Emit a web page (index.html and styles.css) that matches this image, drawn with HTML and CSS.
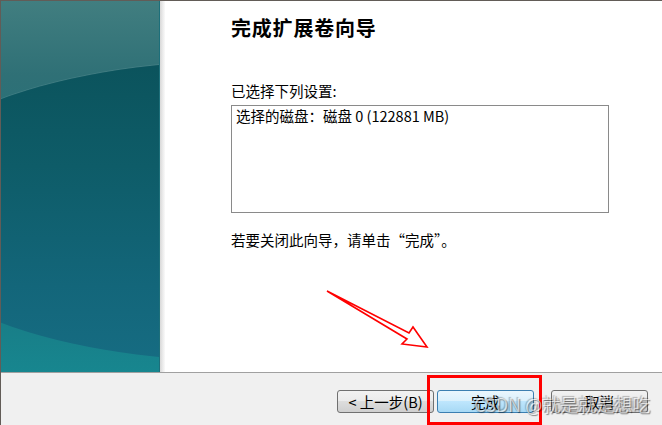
FILE: index.html
```html
<!DOCTYPE html>
<html lang="zh-CN">
<head>
    <meta charset="UTF-8">
    <meta name="viewport" content="width=device-width, initial-scale=1.0">
    <title>扩展卷向导</title>
    <link rel="stylesheet" href="styles.css">
</head>
<body>
    <div class="window">
        <div class="main">
            <div class="banner"></div>
            <div class="banner-edge"></div>
            <div class="content">
                <h1 class="title">完成扩展卷向导</h1>
                <p class="label">已选择下列设置:</p>
                <div class="summary">选择的磁盘：磁盘 0 (122881 MB)</div>
                <p class="hint">若要关闭此向导，请单击“完成”。</p>
            </div>
        </div>
        <div class="footer">
            <button class="btn">&lt; 上一步(B)</button>
            <button class="btn btn-default">完成</button>
            <button class="btn btn-cancel">取消</button>
        </div>

        <!-- annotation layer -->
        <svg class="arrow" width="662" height="425" viewBox="0 0 662 425">
            <polygon points="327,291 409,333 413,327 427,347 402,344 407,339" fill="none" stroke="#ff0000" stroke-width="1.6" stroke-linejoin="miter"/>
        </svg>
        <div class="highlight"></div>
        <div class="watermark">CSDN @就是就是想吃</div>
    </div>
</body>
</html>
```

FILE: styles.css
```css
body {
    margin: 0;
    background: #fff;
    font-family: "Noto Sans CJK SC", "Liberation Sans", sans-serif;
    overflow: hidden;
}
.window {
    position: relative;
    height: 424px;
    border-top: 1px solid #625c57;
    border-left: 1px solid #625c57;
    display: flex;
    flex-direction: column;
}
.main {
    display: flex;
    height: 371px;
    background: #fff;
}
.banner {
    position: relative;
    width: 158px;
    overflow: hidden;
    background: linear-gradient(to bottom, #417e80 0%, #2f7076 20%, #1a747e 70%, #17868f 100%);
}
.banner::before {
    content: "";
    position: absolute;
    left: -120px;
    top: 60px;
    width: 720px;
    height: 300px;
    border-radius: 50%;
    background: linear-gradient(to bottom, #0b535c 0%, #0e5c68 35%, #13667a 75%, #166c82 100%);
    box-shadow: 0 -1px 0 rgba(255, 255, 255, 0.08);
}
.banner-edge {
    width: 5px;
    border-left: 1px solid #1d6f7a;
    background: linear-gradient(to right, #d8d8d8, #ededed 60%, #fafafa);
}
.content {
    flex: 1;
    padding: 15px 0 0 66px;
    color: #000;
}
.title {
    margin: 0;
    font-size: 20px;
    line-height: 24px;
    font-weight: bold;
    letter-spacing: 0.8px;
}
.label {
    margin: 42px 0 5px;
    font-size: 14.5px;
    line-height: 18px;
}
.summary {
    width: 368px;
    height: 104px;
    padding: 1px 4px;
    border: 1px solid #8a8a8a;
    font-size: 14.5px;
    line-height: 18px;
}
.hint {
    margin: 18px 0 0;
    font-size: 14.5px;
    line-height: 18px;
}
.footer {
    flex: 1;
    display: flex;
    justify-content: flex-end;
    align-items: flex-start;
    padding: 17px 14px 0 0;
    background: #f0f0f0;
    border-top: 1px solid #a0a0a0;
}
.btn {
    width: 97px;
    height: 23px;
    padding: 0;
    border: 1px solid #707070;
    border-radius: 3px;
    background: linear-gradient(to bottom, #f2f2f2 0%, #ebebeb 49%, #dddddd 50%, #cfcfcf 100%);
    font-family: "Noto Sans CJK SC", sans-serif;
    font-size: 14.5px;
    line-height: 20px;
    color: #000;
    margin-left: 3px;
}
.btn-default {
    border-color: #3c7fb1;
    background: linear-gradient(to bottom, #eaf6fd 0%, #d9f0fc 49%, #bee6fd 50%, #a7d9f5 100%);
}
.btn-cancel {
    margin-left: 17px;
}
.arrow {
    position: absolute;
    left: -1px;
    top: -1px;
    pointer-events: none;
}
.highlight {
    position: absolute;
    left: 426px;
    top: 374px;
    width: 109px;
    height: 44px;
    border: 3px solid #ff0000;
}
.watermark {
    position: absolute;
    left: 473px;
    top: 391px;
    font-size: 18px;
    line-height: 24px;
    color: rgba(255, 255, 255, 0.65);
    text-shadow: 1px 1px 1px rgba(0, 0, 0, 0.45), -1px -1px 1px rgba(0, 0, 0, 0.25);
    white-space: nowrap;
    pointer-events: none;
}
```
